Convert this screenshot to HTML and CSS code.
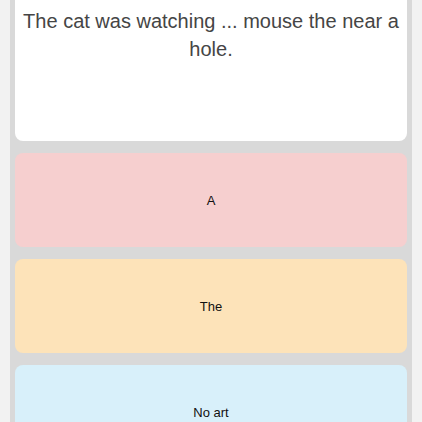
FILE: index.html
```html
<!DOCTYPE html>
<html lang="en">
<head>
	<meta charset="UTF-8">
	<title>quiz</title>
	<link rel="stylesheet" href="styles.css">
</head>
<body>
	<div class="panel">
		<div class="question">
			<p>The cat was watching ... mouse the near a hole.</p>
		</div>
		<div class="answers">
			<div class="answer red">A</div>
			<div class="answer yellow">The</div>
			<div class="answer blue">No art</div>
		</div>
	</div>
</body>
</html>
```

FILE: styles.css
```css
html, body {
	margin: 0;
	padding: 0;
	background-color: #f2f2f2;
	font-family: "Liberation Sans", Arial, sans-serif;
	overflow: hidden;
}
.panel {
	margin: 0 10px;
	padding: 0 5px 20px;
	background-color: #d9d9d9;
	min-height: 422px;
}
.question {
	background-color: #fff;
	border-radius: 0 0 8px 8px;
	height: 141px;
	padding: 7px 4px 0;
	box-sizing: border-box;
}
.question p {
	margin: 0;
	font-size: 20px;
	line-height: 28px;
	color: #454545;
	text-align: center;
}
.answers {
	display: flex;
	flex-direction: column;
	gap: 12px;
	margin-top: 12px;
}
.answer {
	height: 94px;
	border-radius: 8px;
	display: flex;
	align-items: center;
	justify-content: center;
	font-size: 13px;
	color: #111;
}
.red {
	background-color: #f6cfcf;
}
.yellow {
	background-color: #fde3b9;
}
.blue {
	background-color: #d8f0fa;
}
```
